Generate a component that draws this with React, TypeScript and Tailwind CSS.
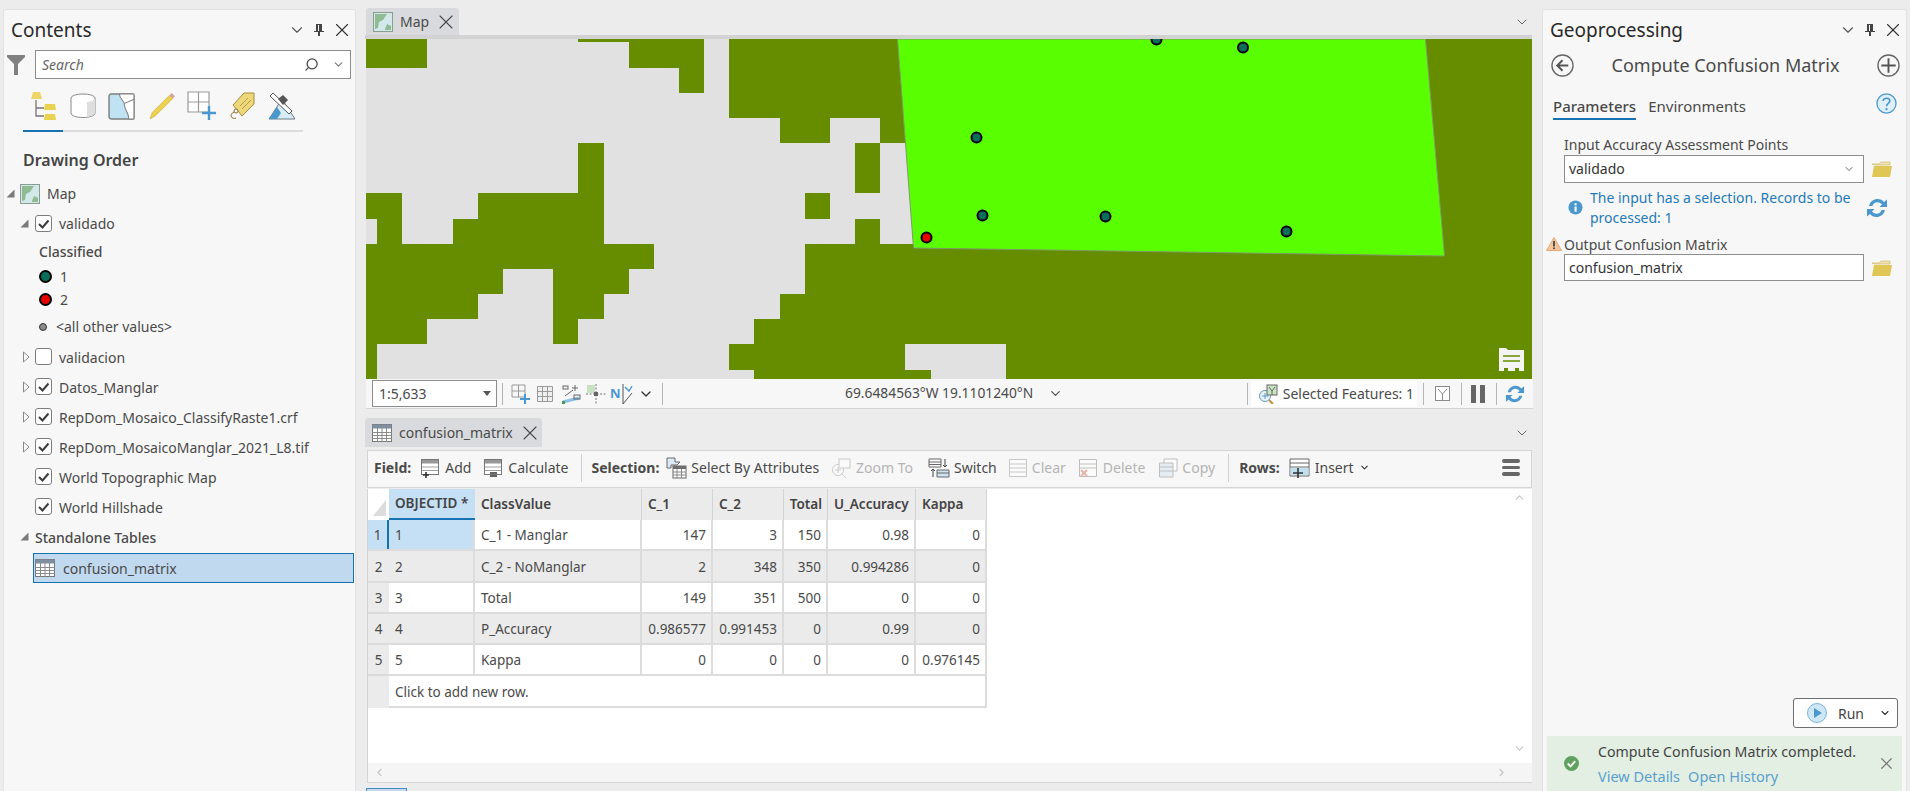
import { ChevronDown, ChevronLeft, ChevronRight, ChevronUp, Search, X } from "lucide-react";
import type { ReactNode } from "react";

const OLIVE_RECTS = [
  [366, 39, 61, 29],
  [578, 39, 51, 3],
  [629, 39, 75, 29],
  [679, 68, 25, 25],
  [729, 39, 176, 79],
  [780, 118, 50, 25],
  [880, 118, 25, 25],
  [855, 143, 25, 50],
  [805, 193, 25, 26],
  [855, 219, 25, 25],
  [578, 143, 26, 50],
  [478, 193, 126, 26],
  [453, 219, 151, 25],
  [366, 193, 36, 26],
  [377, 219, 25, 25],
  [366, 244, 288, 25],
  [366, 269, 137, 25],
  [553, 269, 76, 25],
  [366, 294, 112, 25],
  [553, 294, 51, 25],
  [366, 319, 61, 25],
  [553, 319, 25, 25],
  [366, 344, 11, 35],
  [805, 244, 727, 50],
  [780, 294, 752, 25],
  [754, 319, 778, 25],
  [729, 344, 176, 26],
  [754, 370, 177, 9],
  [1006, 344, 526, 35],
  [905, 39, 627, 104],
  [915, 143, 617, 101],
];

const POINTS = [
  [1156.5, 39.5],
  [1243, 47.5],
  [976.5, 137.5],
  [982.5, 215.5],
  [1105.5, 216.5],
  [1286.5, 231.5],
];

const TABLE_COLS = "grid-cols-[21px_86px_167px_71px_71px_44px_88px_71px]";

const ROWS = [
  ["1", "C_1 - Manglar", "147", "3", "150", "0.98", "0"],
  ["2", "C_2 - NoManglar", "2", "348", "350", "0.994286", "0"],
  ["3", "Total", "149", "351", "500", "0", "0"],
  ["4", "P_Accuracy", "0.986577", "0.991453", "0", "0.99", "0"],
  ["5", "Kappa", "0", "0", "0", "0", "0.976145"],
];

function Check() {
  return (
    <svg viewBox="0 0 18 18" className="h-[18px] w-[18px] shrink-0">
      <rect x="0.5" y="0.5" width="16" height="16" rx="2.5" fill="#fff" stroke="#7d7d7d" />
      <path d="M4 9 L7.5 12.5 L13.5 5.5" fill="none" stroke="#3c3c3c" strokeWidth="2" />
    </svg>
  );
}

function EmptyCheck() {
  return (
    <svg viewBox="0 0 18 18" className="h-[18px] w-[18px] shrink-0">
      <rect x="0.5" y="0.5" width="16" height="16" rx="2.5" fill="#fff" stroke="#7d7d7d" />
    </svg>
  );
}

function Expander({ open }: { open?: boolean }) {
  return (
    <svg viewBox="0 0 9 12" className="h-3 w-[9px] shrink-0">
      {open ? (
        <path d="M0.5 9.5 L8.5 9.5 L8.5 1.5 Z" fill="#7a7a7a" />
      ) : (
        <path d="M1.5 1 L7 6 L1.5 11 Z" fill="#fbfbfb" stroke="#8a8a8a" />
      )}
    </svg>
  );
}

function MapGlyph({ size = 20 }: { size?: number }) {
  return (
    <svg viewBox="0 0 20 20" width={size} height={size} className="shrink-0">
      <rect x="0.5" y="0.5" width="19" height="19" fill="#d3e8ea" stroke="#8b9c90" />
      <path d="M2 2 H14 L10 8 L6 10 L5 16 L2 17 Z" fill="#8fbb93" />
      <path d="M12 17 L14 12 L18 14 V18 H12 Z" fill="#8fbb93" />
    </svg>
  );
}

function TableGlyph({ size = 20 }: { size?: number }) {
  return (
    <svg viewBox="0 0 20 18" width={size} height={size * 0.9} className="shrink-0">
      <rect x="0.5" y="0.5" width="19" height="17" fill="#fff" stroke="#767676" />
      <rect x="0.5" y="0.5" width="19" height="4" fill="#7f8fa0" />
      <path d="M0 8.5 H20 M0 11.5 H20 M0 14.5 H20 M5.5 4 V18 M10 4 V18 M14.5 4 V18" stroke="#8a8a8a" />
    </svg>
  );
}

function Folder() {
  return (
    <svg viewBox="0 0 22 18" className="h-[18px] w-[22px]">
      <path d="M1 4 H8 L10 2 H19 V5 H4 Z" fill="#efe2b0" stroke="#cdbb6c" strokeWidth="0.7" />
      <path d="M3 6 H21 L19 17 H1 Z" fill="#dfc655" />
    </svg>
  );
}

function Refresh({ className }: { className: string }) {
  return (
    <svg viewBox="0 0 22 22" className={className} fill="#4b98ce">
      <path d="M3 9 C4 4.5 8 2 11.5 2 C14.5 2 16.5 3.3 18 5 L21 2.5 V10 H13.5 L16 7.6 C15 6.4 13.5 5.3 11.5 5.3 C9 5.3 7 6.7 6.3 9 Z" />
      <path d="M19 13 C18 17.5 14 20 10.5 20 C7.5 20 5.5 18.7 4 17 L1 19.5 V12 H8.5 L6 14.4 C7 15.6 8.5 16.7 10.5 16.7 C13 16.7 15 15.3 15.7 13 Z" />
    </svg>
  );
}

function PanelHeader({ title }: { title: string }) {
  return (
    <div className="flex h-[40px] shrink-0 items-center pl-[7px] pr-[2px]">
      <span className="flex-1 text-[19px] text-[#2a2a2a]">{title}</span>
      <ChevronDown size={18} strokeWidth={1.5} className="mr-[7px] text-[#555]" />
      <svg viewBox="0 0 12 14" className="mr-[6px] h-[14px] w-[12px]">
        <path d="M3 1 H9 V8 H11 V9 H7 V13 H5 V9 H1 V8 H3 Z M5 2 V8 H6 V2 Z" fill="#444" />
      </svg>
      <X size={22} strokeWidth={1.2} className="text-[#333]" />
    </div>
  );
}

function TreeRow({
  h,
  indent,
  children,
}: {
  h: string;
  indent: string;
  children: ReactNode;
}) {
  return <div className={`flex items-center ${h} ${indent}`}>{children}</div>;
}

function Layer({ name, checked, expand }: { name: string; checked: boolean; expand?: boolean }) {
  return (
    <TreeRow h="h-[30px]" indent="pl-[18px]">
      <div className="w-[13px]">{expand && <Expander />}</div>
      {checked ? <Check /> : <EmptyCheck />}
      <span className="ml-[6px]">{name}</span>
    </TreeRow>
  );
}

function Dot({ fill }: { fill: string }) {
  return <span className={`h-[13px] w-[13px] rounded-full border-[2px] border-black ${fill}`} />;
}

function ContentsIcons() {
  return (
    <div className="ml-[24px] mt-[13px] flex h-[28px] items-center gap-[11px]">
      <svg viewBox="0 0 30 30" className="h-[30px] w-[30px]">
        <path d="M5 1 H12 L14 8 H3 Z" fill="#eed565" />
        <path d="M8 9 V25 H16 M8 17 H16" fill="none" stroke="#777" strokeWidth="1.3" />
        <path d="M17 13 H27 L28 19 H16 Z M17 23 H27 L28 29 H16 Z" fill="#e9d24f" />
      </svg>
      <svg viewBox="0 0 28 28" className="h-[28px] w-[28px]">
        <ellipse cx="14" cy="6" rx="12" ry="4" fill="#fff" stroke="#8a8a8a" />
        <path d="M2 6 V21 C2 27 26 27 26 21 V6" fill="#fff" stroke="#8a8a8a" />
        <path d="M18 10 C22 10 25 8.5 26 6 V21 C25 23 21 24.5 18 25 Z" fill="#dedede" />
      </svg>
      <svg viewBox="0 0 26 26" className="h-[27px] w-[27px]">
        <rect x="1" y="1" width="24" height="24" rx="2" fill="#bfe3f2" stroke="#7f7f7f" strokeWidth="1.4" />
        <path d="M11 1 C11 6 16 7 16 12 C16 17 20 18 20 25 H25 V1 Z" fill="#fff" stroke="#7f7f7f" strokeWidth="1" />
        <path d="M16 10 L25 6" stroke="#7f7f7f" fill="none" />
      </svg>
      <svg viewBox="0 0 26 26" className="ml-[2px] h-[28px] w-[28px]">
        <path d="M2 25 L4 19 L20 3 L23 6 L7 22 Z" fill="#eed04f" stroke="#c9ad3a" strokeWidth="0.6" />
        <path d="M20 3 L22 1 L25 4 L23 6 Z" fill="#d9a39a" />
      </svg>
      <svg viewBox="0 0 30 30" className="h-[30px] w-[30px]">
        <path d="M1 1 H22 V21 H1 Z M11.5 1 V21 M1 11 H22" fill="#fff" stroke="#9a9a9a" strokeWidth="1.2" />
        <path d="M22 15 V29 M15 22 H29" stroke="#4b98ce" strokeWidth="2.4" />
      </svg>
      <svg viewBox="0 0 28 30" className="h-[30px] w-[28px]">
        <path d="M5 14 L16 2 H26 V13 L14 25 Z" fill="#eed77a" stroke="#a98d3a" strokeWidth="1" />
        <circle cx="8" cy="20" r="2" fill="#fff" stroke="#8a6e26" />
        <path d="M6 21 C1 23 3 29 8 27" fill="none" stroke="#8a6e26" />
        <path d="M12 15 L20 7 M14 18 L23 9" stroke="#b89c46" />
      </svg>
      <svg viewBox="0 0 30 30" className="h-[30px] w-[30px]">
        <path d="M2 28 L15 8 L28 28 Z" fill="#d7ecf5" stroke="#6a7d88" />
        <path d="M2 28 L10 16 L14 22 L10 28 Z" fill="#4b98ce" />
        <path d="M6 2 L25 20 L22 23 L3 5 Z" fill="#fff" stroke="#555" />
        <path d="M11 8 L16 4 L21 9 L16 14 Z" fill="#555" />
      </svg>
    </div>
  );
}

function ContentsPanel() {
  return (
    <div className="flex w-[353px] shrink-0 flex-col rounded-t-[3px] border border-b-0 border-[#e2e2e2] bg-[#f7f7f7] text-[14px] text-[#4a4a4a]">
      <PanelHeader title="Contents" />
      <div className="flex h-[29px] shrink-0 items-center pl-[3px] pr-[4px]">
        <svg viewBox="0 0 18 20" className="mr-[10px] h-[20px] w-[18px]">
          <path d="M0 0 H18 V2 L11 9 V20 H7 V9 L0 2 Z" fill="#808080" />
        </svg>
        <div className="flex h-[29px] flex-1 items-center border border-[#8d8d8d] bg-white pl-[6px] pr-[5px]">
          <span className="flex-1 text-[14px] italic text-[#666]">Search</span>
          <Search size={15} strokeWidth={2} className="mr-[13px] -scale-x-100 text-[#444]" />
          <ChevronDown size={13} className="text-[#777]" />
        </div>
      </div>
      <ContentsIcons />
      <div className="ml-[19px] mt-[10px] flex h-[2px] w-[280px] bg-[#dcdcdc]">
        <div className="w-[40px] bg-[#1672b0]" />
      </div>
      <div className="ml-[19px] mt-[16px] flex h-[24px] items-center text-[16px] font-semibold text-[#444]">
        Drawing Order
      </div>
      <TreeRow h="mt-[6px] h-[31px]" indent="pl-[2px]">
        <Expander open />
        <div className="ml-[5px]">
          <MapGlyph />
        </div>
        <span className="ml-[7px]">Map</span>
      </TreeRow>
      <TreeRow h="h-[29px]" indent="pl-[16px]">
        <Expander open />
        <div className="ml-[6px]">
          <Check />
        </div>
        <span className="ml-[6px]">validado</span>
      </TreeRow>
      <TreeRow h="h-[26px]" indent="pl-[35px]">
        <span className="font-medium">Classified</span>
      </TreeRow>
      <TreeRow h="h-[24px]" indent="pl-[35px]">
        <Dot fill="bg-[#0b6e5b]" />
        <span className="ml-[8px]">1</span>
      </TreeRow>
      <TreeRow h="h-[23px]" indent="pl-[35px]">
        <Dot fill="bg-[#e60000]" />
        <span className="ml-[8px]">2</span>
      </TreeRow>
      <TreeRow h="h-[31px]" indent="pl-[35px]">
        <span className="h-[8px] w-[8px] rounded-full border border-[#333] bg-[#8a8a8a]" />
        <span className="ml-[9px]">{"<all other values>"}</span>
      </TreeRow>
      <Layer name="validacion" checked={false} expand />
      <Layer name="Datos_Manglar" checked expand />
      <Layer name="RepDom_Mosaico_ClassifyRaste1.crf" checked expand />
      <Layer name="RepDom_MosaicoManglar_2021_L8.tif" checked expand />
      <Layer name="World Topographic Map" checked />
      <Layer name="World Hillshade" checked />
      <TreeRow h="h-[30px]" indent="pl-[16px]">
        <Expander open />
        <span className="ml-[6px] font-medium">Standalone Tables</span>
      </TreeRow>
      <div className="ml-[29px] mr-[1px] mt-px flex h-[30px] items-center border border-[#1672b0] bg-[#c1d9ee] pl-[1px]">
        <TableGlyph />
        <span className="ml-[8px]">confusion_matrix</span>
      </div>
    </div>
  );
}

function MapCanvas() {
  return (
    <svg viewBox="366 39 1166 340" className="h-[340px] w-[1166px] shrink-0">
      <rect x="366" y="39" width="1166" height="340" fill="#e1e1e1" />
      {OLIVE_RECTS.map(([x, y, w, h]) => (
        <rect key={`${x}-${y}`} x={x} y={y} width={w} height={h} fill="#668c00" />
      ))}
      <path d="M897.5 39 L913.5 248 L1444.5 256 L1425.5 39 Z" fill="#59ff00" stroke="#7f9a6a" strokeWidth="1" />
      {POINTS.map(([cx, cy]) => (
        <circle key={cx} cx={cx} cy={cy} r="5" fill="#0b6e5b" stroke="#000" strokeWidth="2" />
      ))}
      <circle cx="926.5" cy="237.5" r="5" fill="#e60000" stroke="#000" strokeWidth="2" />
      <g fill="#f4f4f4">
        <path d="M1499 348 H1506 L1508 350 H1524 V371 H1519 V368 H1515 V371 H1508 V368 H1504 V371 H1499 Z" />
      </g>
      <path d="M1503 356 H1520 M1503 361 H1520" stroke="#668c00" strokeWidth="1.3" />
    </svg>
  );
}

function StatusSep() {
  return <div className="h-[22px] w-px shrink-0 bg-[#b5b5b5]" />;
}

function MapStatusBar() {
  return (
    <div className="flex h-[30px] shrink-0 items-center border-b border-[#d4d4d4] bg-[#f7f7f7] pl-[6px] text-[14px] text-[#4a4a4a]">
      <div className="flex h-[27px] w-[125px] items-center border border-[#8d8d8d] bg-white pl-[6px]">
        <span className="flex-1">1:5,633</span>
        <svg viewBox="0 0 8 5" className="mr-[5px] h-[5px] w-[8px]">
          <path d="M0 0 H8 L4 5 Z" fill="#555" />
        </svg>
      </div>
      <div className="ml-[5px]">
        <StatusSep />
      </div>
      <svg viewBox="0 0 20 20" className="ml-[8px] h-[20px] w-[20px]">
        <path d="M1 1 H14 V13 H1 Z M7.5 1 V13 M1 7 H14" fill="none" stroke="#9a9a9a" />
        <path d="M14 10 V20 M9 15 H19" stroke="#4b98ce" strokeWidth="2" />
      </svg>
      <svg viewBox="0 0 16 16" className="ml-[6px] h-[16px] w-[16px]">
        <path d="M0.5 0.5 H15.5 V15.5 H0.5 Z M5.5 0 V16 M10.5 0 V16 M0 5.5 H16 M0 10.5 H16" fill="#efefef" stroke="#9a9a9a" />
      </svg>
      <svg viewBox="0 0 20 20" className="ml-[8px] h-[20px] w-[20px]">
        <path d="M2 18 L18 14" stroke="#8ac1e2" strokeWidth="3" />
        <rect x="1" y="17" width="3" height="3" fill="#4d9a4d" />
        <rect x="2" y="2" width="5" height="3" fill="none" stroke="#666" />
        <path d="M4 12 L12 6 M14 1 V7 M11 4 H17" stroke="#666" fill="none" />
        <rect x="13" y="11" width="6" height="4" fill="none" stroke="#666" />
      </svg>
      <svg viewBox="0 0 20 20" className="ml-[5px] h-[20px] w-[20px]">
        <rect x="1" y="1" width="8" height="8" fill="#c9e2c4" />
        <path d="M0 10 H20 M10 0 V20" stroke="#777" strokeDasharray="2 1.5" />
        <rect x="8" y="8" width="4" height="4" fill="#666" />
      </svg>
      <span className="ml-[4px] text-[13px] font-bold text-[#4b98ce]">N</span>
      <svg viewBox="0 0 12 20" className="h-[20px] w-[12px]">
        <path d="M2 0 V20 M2 20 L11 9" stroke="#555" fill="none" />
        <path d="M4 3 L8 7 L11 2" stroke="#4b98ce" fill="none" strokeWidth="1.4" />
      </svg>
      <ChevronDown size={16} strokeWidth={2} className="ml-[5px] text-[#333]" />
      <div className="ml-[8px]">
        <StatusSep />
      </div>
      <div className="flex flex-1 items-center justify-center pr-px text-[13.8px]">
        <span>69.6484563°W 19.1101240°N</span>
        <ChevronDown size={15} strokeWidth={2} className="ml-[15px] text-[#555]" />
      </div>
      <StatusSep />
      <div className="ml-[3px] flex h-[26px] items-center bg-white pl-[7px] pr-[3px]">
        <svg viewBox="0 0 20 20" className="h-[20px] w-[20px]">
          <circle cx="7" cy="12" r="5.5" fill="#e8f2f8" stroke="#5f9cc6" />
          <path d="M7 9 V15 M4 12 H10" stroke="#5f9cc6" />
          <path d="M11 16 L15 20" stroke="#c98f3a" strokeWidth="2" />
          <rect x="9" y="1" width="10" height="10" fill="#c7e6c0" stroke="#666" />
          <path d="M11 3 L14 7 L17 3 M14 7 V11" stroke="#666" fill="none" />
        </svg>
        <span className="ml-[5px]">Selected Features: 1</span>
      </div>
      <div className="ml-[6px]">
        <StatusSep />
      </div>
      <svg viewBox="0 0 15 15" className="ml-[11px] h-[15px] w-[15px]">
        <rect x="0.5" y="0.5" width="14" height="14" fill="#fff" stroke="#8a8a8a" />
        <path d="M3 3 L7.5 8 L12 3 M7.5 8 V14" stroke="#8a8a8a" fill="none" />
      </svg>
      <div className="ml-[11px]">
        <StatusSep />
      </div>
      <div className="ml-[9px] flex h-[18px] gap-[4px]">
        <div className="w-[5px] bg-[#666]" />
        <div className="w-[5px] bg-[#666]" />
      </div>
      <div className="ml-[11px]">
        <StatusSep />
      </div>
      <div className="ml-[8px] mr-[8px]">
        <Refresh className="h-[20px] w-[20px]" />
      </div>
    </div>
  );
}

function ToolbarSep() {
  return <div className="h-[28px] w-px shrink-0 bg-[#d0d0d0]" />;
}

function Sheet({ children, tone = "#767676" }: { children?: ReactNode; tone?: string }) {
  return (
    <svg viewBox="0 0 20 20" className="h-[20px] w-[20px] shrink-0">
      <rect x="1.5" y="1.5" width="17" height="15" fill="#fff" stroke={tone} />
      <rect x="1.5" y="1.5" width="17" height="4" fill={tone} opacity="0.75" />
      <path d="M1 9 H19 M1 12.5 H19" stroke={tone} opacity="0.7" />
      {children}
    </svg>
  );
}

function TableToolbar() {
  return (
    <div className="flex h-[38px] shrink-0 items-center border border-[#d4d4d4] bg-[#f7f7f7] pb-[3px] pl-[6px] text-[14px] text-[#4a4a4a]">
      <span className="font-bold">Field:</span>
      <div className="ml-[9px]">
        <Sheet>
          <path d="M6 14 V20 M3 17 H9" stroke="#333" strokeWidth="1.6" />
        </Sheet>
      </div>
      <span className="ml-[5px]">Add</span>
      <div className="ml-[12px]">
        <Sheet>
          <path d="M7 15 H14 M7 18 H14" stroke="#333" strokeWidth="1.5" />
        </Sheet>
      </div>
      <span className="ml-[5px]">Calculate</span>
      <div className="ml-[13px]">
        <ToolbarSep />
      </div>
      <span className="ml-[9px] font-bold">Selection:</span>
      <svg viewBox="0 0 21 22" className="ml-[7px] h-[22px] w-[21px]">
        <path d="M1 1 H9 V5 H14 L11 8 H5 V11 H1 Z" fill="#dcecf6" stroke="#666" />
        <rect x="7" y="9" width="13" height="12" fill="#fff" stroke="#666" />
        <rect x="7" y="9" width="13" height="3" fill="#6e6e6e" />
        <path d="M7 15 H20 M7 18 H20 M11 12 V21 M15.5 12 V21" stroke="#888" />
      </svg>
      <span className="ml-[4px]">Select By Attributes</span>
      <svg viewBox="0 0 20 20" className="ml-[12px] h-[20px] w-[20px] opacity-40">
        <circle cx="7" cy="12" r="5.5" fill="#fff" stroke="#8a8a8a" />
        <path d="M7 9 V15 M4 12 H10 M11 16 L15 20" stroke="#8a8a8a" />
        <rect x="8" y="1" width="11" height="9" fill="#fff" stroke="#8a8a8a" />
      </svg>
      <span className="ml-[5px] text-[#b4b4b4]">Zoom To</span>
      <svg viewBox="0 0 22 20" className="ml-[15px] h-[20px] w-[22px]">
        <path d="M1 1 H13 V9 H1 Z M1 4 H13 M1 6.5 H13" fill="#fff" stroke="#666" />
        <path d="M9 12 H21 V19 H9 Z M9 15 H21" fill="#cfe4f0" stroke="#666" />
        <path d="M17 1 V9 M15 7 L17 9 L19 7 M5 11 V19 M3 13 L5 11 L7 13" stroke="#444" fill="none" />
      </svg>
      <span className="ml-[4px]">Switch</span>
      <svg viewBox="0 0 20 20" className="ml-[11px] h-[20px] w-[20px] opacity-50">
        <path d="M1.5 1.5 H18.5 V18.5 H1.5 Z M1 6 H19 M1 10 H19 M1 14 H19" fill="#fff" stroke="#9a9a9a" />
      </svg>
      <span className="ml-[4px] text-[#b4b4b4]">Clear</span>
      <svg viewBox="0 0 20 20" className="ml-[12px] h-[20px] w-[20px] opacity-60">
        <path d="M1.5 1.5 H18.5 V18.5 H1.5 Z M1 6 H19 M1 10 H19" fill="#fff" stroke="#9a9a9a" />
        <path d="M3 12 L9 18 M9 12 L3 18" stroke="#d88973" strokeWidth="2" />
      </svg>
      <span className="ml-[5px] text-[#b4b4b4]">Delete</span>
      <svg viewBox="0 0 20 20" className="ml-[13px] h-[20px] w-[20px] opacity-60">
        <path d="M6 1 H19 V13 H6 Z" fill="#fff" stroke="#9a9a9a" />
        <path d="M1.5 5 H15 V19 H1.5 Z M1 9 H15 M1 13 H15" fill="#dbe8ef" stroke="#9a9a9a" />
      </svg>
      <span className="ml-[4px] text-[#b4b4b4]">Copy</span>
      <div className="ml-[13px]">
        <ToolbarSep />
      </div>
      <span className="ml-[10px] font-bold">Rows:</span>
      <svg viewBox="0 0 21 20" className="ml-[9px] h-[20px] w-[21px]">
        <path d="M1 1 H20 V18 H1 Z M1 5 H20 M1 9 H20" fill="#fff" stroke="#666" />
        <rect x="1.5" y="10" width="18" height="7" fill="#bfe0ee" />
        <path d="M9 10 V20 M4 15 H14" stroke="#333" strokeWidth="1.6" />
      </svg>
      <span className="ml-[5px]">Insert</span>
      <ChevronDown size={11} strokeWidth={2.4} className="ml-[5px] text-[#333]" />
      <div className="ml-auto mr-[11px] flex w-[18px] flex-col gap-[3px]">
        <div className="h-[3.5px] rounded-sm bg-[#666]" />
        <div className="h-[3.5px] rounded-sm bg-[#666]" />
        <div className="h-[3.5px] rounded-sm bg-[#666]" />
      </div>
    </div>
  );
}

function HeaderCell({ label, right }: { label: string; right?: boolean }) {
  return (
    <div
      className={`flex items-center border-r border-[#d4d4d4] bg-[#ebebeb] font-semibold text-[#444] ${right ? "justify-end pr-[5px]" : "pl-[6px]"}`}
    >
      {label}
    </div>
  );
}

function AttributeTable() {
  return (
    <div className="w-[619px] shrink-0 text-[13.5px] text-[#4a4a4a]">
      <div className={`grid h-[31px] ${TABLE_COLS}`}>
        <div className="flex items-end justify-center bg-white pb-[4px] pl-[2px]">
          <svg viewBox="0 0 13 16" className="h-[16px] w-[13px]">
            <path d="M0 16 L13 0 V16 Z" fill="#dcdcdc" />
          </svg>
        </div>
        <div className="flex items-center border-b-[2px] border-[#1672b0] bg-[#c5e0f5] pl-[6px] font-semibold text-[#444]">
          OBJECTID *
        </div>
        <HeaderCell label="ClassValue" />
        <HeaderCell label="C_1" />
        <HeaderCell label="C_2" />
        <HeaderCell label="Total" right />
        <HeaderCell label="U_Accuracy" />
        <HeaderCell label="Kappa" />
      </div>
      {ROWS.map((row, i) => {
        const shaded = i === 1 || i === 3;
        const selected = i === 0;
        return (
          <div
            key={row[0]}
            className={`grid ${i === 1 ? "h-[32px]" : "h-[31px]"} ${TABLE_COLS} border-b-[2px] border-[#dcdcdc] ${shaded ? "bg-[#ebebeb]" : "bg-white"}`}
          >
            <div className={`flex items-center justify-center pt-[2px] ${selected ? "border-r-[2px] border-[#1672b0] bg-[#c5e0f5]" : "bg-[#ebebeb]"}`}>
              {row[0]}
            </div>
            <div className={`flex items-center border-r-[2px] border-[#dcdcdc] pl-[6px] pt-[2px] ${selected ? "bg-[#c5e0f5]" : ""}`}>{row[0]}</div>
            <div className="flex items-center border-r-[2px] border-[#dcdcdc] pl-[6px] pt-[2px]">{row[1]}</div>
            {row.slice(2).map((v, j) => (
              <div key={j} className="flex items-center justify-end border-r-[2px] border-[#dcdcdc] pr-[5px] pt-[2px]">
                {v}
              </div>
            ))}
          </div>
        );
      })}
      <div className="flex h-[32px]">
        <div className="w-[21px] bg-[#ebebeb]" />
        <div className="flex flex-1 items-center border-b-[2px] border-r-[2px] border-[#dcdcdc] bg-white pl-[6px] pt-[2px]">
          Click to add new row.
        </div>
      </div>
    </div>
  );
}

function MapArea() {
  return (
    <div className="flex w-[1168px] shrink-0 flex-col">
      <div className="mt-[8px] flex h-[27px] shrink-0 items-center">
        <div className="ml-px flex h-[27px] w-[93px] items-center rounded-t-[3px] bg-[#d9dadd] pl-[7px] text-[14px] text-[#4a4a4a]">
          <MapGlyph />
          <span className="ml-[7px]">Map</span>
          <X size={24} strokeWidth={1.1} className="ml-[5px]" />
        </div>
        <ChevronDown size={16} strokeWidth={1.5} className="ml-auto mr-[3px] text-[#666]" />
      </div>
      <div className="mr-px h-[4px] shrink-0 bg-[#d2d2d2]" />
      <div className="ml-px flex h-[370px] shrink-0 flex-col">
        <MapCanvas />
        <MapStatusBar />
      </div>
      <div className="mt-[9px] flex h-[29px] shrink-0 items-center">
        <div className="flex h-[29px] w-[177px] items-center rounded-t-[3px] bg-[#d9dadd] pl-[7px] text-[14px] text-[#4a4a4a]">
          <TableGlyph />
          <span className="ml-[7px]">confusion_matrix</span>
          <X size={24} strokeWidth={1.1} className="ml-[5px]" />
        </div>
        <ChevronDown size={16} strokeWidth={1.5} className="ml-auto mr-[3px] text-[#666]" />
      </div>
      <div className="ml-[2px] mr-px mt-[3px] flex h-[334px] shrink-0 flex-col">
        <TableToolbar />
        <div className="mt-px flex h-[274px] shrink-0 border-l border-[#d4d4d4] bg-white">
          <AttributeTable />
          <div className="ml-auto mr-[6px] flex w-[14px] flex-col items-center justify-between pb-[8px] pt-[2px] text-[#c4c4c4]">
            <ChevronUp size={13} />
            <ChevronDown size={13} />
          </div>
        </div>
        <div className="flex h-[20px] shrink-0 items-center justify-between border-b border-l border-[#d4d4d4] bg-[#f5f5f5] pl-[5px] pr-[24px] text-[#c4c4c4]">
          <ChevronLeft size={13} />
          <ChevronRight size={13} />
        </div>
      </div>
      <div className="ml-[1px] mt-[4px] h-[4px] w-[41px] shrink-0 border border-b-0 border-[#3c8ec7] bg-[#c5d9e8]" />
    </div>
  );
}

function Field({ value, chevron, h }: { value: string; chevron?: boolean; h: string }) {
  return (
    <div className="ml-[21px] flex items-center">
      <div className={`flex ${h} w-[300px] items-center border border-[#8d8d8d] bg-white pb-px pl-[4px] pr-[8px] text-[14px] text-[#333]`}>
        <span className="flex-1">{value}</span>
        {chevron && <ChevronDown size={12} className="text-[#666]" />}
      </div>
      <div className="ml-[7px]">
        <Folder />
      </div>
    </div>
  );
}

function GeoprocessingPanel() {
  return (
    <div className="flex w-[365px] shrink-0 flex-col rounded-t-[3px] border border-b-0 border-[#e2e2e2] bg-[#f7f7f7] text-[14px] text-[#4a4a4a]">
      <PanelHeader title="Geoprocessing" />
      <div className="flex h-[30px] shrink-0 items-center pl-[8px] pr-[6px]">
        <svg viewBox="0 0 24 24" className="h-[23px] w-[23px]">
          <circle cx="12" cy="12" r="11" fill="none" stroke="#666" strokeWidth="1.4" />
          <path d="M18 12 H7 M12 6.5 L6.5 12 L12 17.5" fill="none" stroke="#555" strokeWidth="2" />
        </svg>
        <span className="flex-1 text-center text-[18px] text-[#4a4a4a]">Compute Confusion Matrix</span>
        <svg viewBox="0 0 24 24" className="h-[23px] w-[23px]">
          <circle cx="12" cy="12" r="11" fill="none" stroke="#666" strokeWidth="1.4" />
          <path d="M12 4.5 V19.5 M4.5 12 H19.5" stroke="#555" strokeWidth="2" />
        </svg>
      </div>
      <div className="mt-[13px] flex h-[27px] shrink-0 items-start pl-[10px] pr-[9px]">
        <div className="h-[27px] border-b-[2px] border-[#1672b0] text-[15px] font-medium leading-[26px]">Parameters</div>
        <div className="ml-[12px] text-[15px] leading-[26px]">Environments</div>
        <svg viewBox="0 0 22 22" className="ml-auto h-[21px] w-[21px]">
          <circle cx="11" cy="11" r="10" fill="#dff0fb" stroke="#4b98ce" strokeWidth="1.3" />
          <path d="M7.5 8.5 C7.5 4.5 14.5 4.5 14.5 8.5 C14.5 11 11 11 11 14" fill="none" stroke="#4b98ce" strokeWidth="1.7" />
          <circle cx="11" cy="17" r="1.2" fill="#4b98ce" />
        </svg>
      </div>
      <div className="ml-[21px] mt-[15px] h-[20px] leading-[20px]">Input Accuracy Assessment Points</div>
      <Field value="validado" chevron h="h-[28px]" />
      <div className="mt-[4px] flex h-[41px] items-center pl-[25px] text-[14px] leading-[20px] text-[#1f7ab8]">
        <svg viewBox="0 0 16 16" className="h-[15px] w-[15px] shrink-0">
          <circle cx="8" cy="8" r="7.5" fill="#4b98ce" />
          <rect x="7" y="7" width="2.2" height="5.5" fill="#fff" />
          <rect x="7" y="3.5" width="2.2" height="2.2" fill="#fff" />
        </svg>
        <div className="ml-[7px] w-[272px]">The input has a selection. Records to be processed: 1</div>
        <Refresh className="ml-[4px] h-[22px] w-[22px]" />
      </div>
      <div className="mt-[6px] flex h-[20px] items-center pl-[3px]">
        <svg viewBox="0 0 16 14" className="h-[14px] w-[16px]">
          <path d="M8 0.5 L15.5 13.5 H0.5 Z" fill="#f3c79c" stroke="#e5a872" />
          <rect x="7.2" y="4" width="1.6" height="5.5" fill="#333" />
          <rect x="7.2" y="10.5" width="1.6" height="1.6" fill="#333" />
        </svg>
        <span className="ml-[2px]">Output Confusion Matrix</span>
      </div>
      <Field value="confusion_matrix" h="h-[27px]" />
      <div className="flex-1" />
      <div className="mr-[8px] flex justify-end">
        <div className="flex h-[30px] w-[105px] items-center rounded-[3px] border border-[#6e6e6e] bg-white pl-[13px] pr-[6px] text-[14px] text-[#444]">
          <svg viewBox="0 0 20 20" className="h-[20px] w-[20px]">
            <circle cx="10" cy="10" r="9.5" fill="#cfe6f7" stroke="#78b3dc" />
            <path d="M7 5 L15 10 L7 15 Z" fill="#4b98ce" />
          </svg>
          <span className="ml-[11px] flex-1">Run</span>
          <ChevronDown size={12} strokeWidth={2.2} className="text-[#333]" />
        </div>
      </div>
      <div className="mx-[4px] mt-[8px] flex h-[55px] shrink-0 items-center bg-[#e2efe2] pl-[17px] pr-[6px]">
        <svg viewBox="0 0 16 16" className="h-[15px] w-[15px] shrink-0">
          <circle cx="8" cy="8" r="8" fill="#5fa25f" />
          <path d="M4 8 L7 11 L12 5.5" fill="none" stroke="#fff" strokeWidth="2" />
        </svg>
        <div className="ml-[19px] flex-1 leading-[25px]">
          <div className="text-[14.2px] text-[#444]">Compute Confusion Matrix completed.</div>
          <div className="text-[14.5px] text-[#5b9fcf]">
            View Details<span className="ml-[8px]">Open History</span>
          </div>
        </div>
        <X size={19} strokeWidth={1.5} className="text-[#777]" />
      </div>
    </div>
  );
}

export default function App() {
  return (
    <div
      className="flex h-[791px] w-[1910px] gap-[9px] overflow-hidden bg-[#ececec] pl-[3px] pr-[3px]"
      style={{ fontFamily: '"Noto Sans", sans-serif' }}
    >
      <div className="mt-[9px] flex">
        <ContentsPanel />
      </div>
      <MapArea />
      <div className="mt-[9px] flex">
        <GeoprocessingPanel />
      </div>
    </div>
  );
}
